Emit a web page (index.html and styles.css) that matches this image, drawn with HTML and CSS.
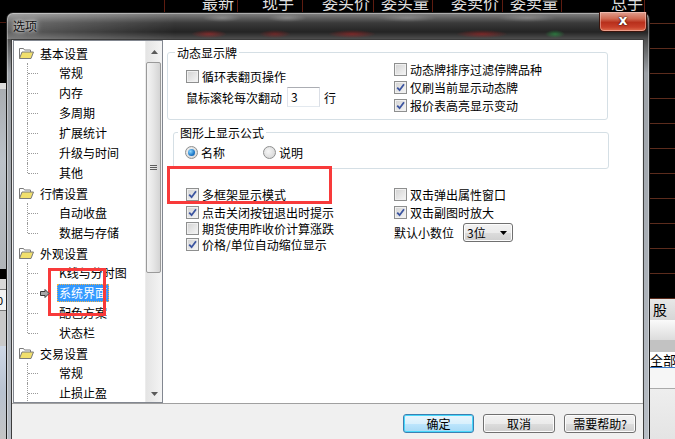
FILE: index.html
```html
<!DOCTYPE html>
<html lang="zh-CN">
<head>
    <meta charset="UTF-8">
    <meta name="viewport" content="width=device-width, initial-scale=1.0">
    <title>选项</title>
    <link rel="stylesheet" href="styles.css">
</head>
<body>
    <!-- trading screen behind the dialog -->
    <div class="app">
        <div class="quote-head">
            <div class="qcell qc-code"></div>
            <div class="qcell qc-last">最新</div>
            <div class="qcell qc-hand">现手</div>
            <div class="qcell qc-bid">委买价</div>
            <div class="qcell qc-bidv">委买量</div>
            <div class="qcell qc-ask">委卖价</div>
            <div class="qcell qc-askv">委卖量</div>
            <div class="qcell qc-total">总手</div>
            <div class="qcell qc-rest"></div>
        </div>
        <div class="app-body">
            <div class="strip-left">
                <div class="ls-a"></div>
                <div class="ls-b"></div>
                <div class="ls-c"></div>
                <div class="ls-d"></div>
                <div class="ls-e"></div>
                <div class="ls-f">0</div>
                <div class="ls-g"></div>
                <div class="ls-h"></div>
            </div>
            <div class="app-center"></div>
            <div class="strip-right">
                <div class="rs-rows"></div>
                <div class="rs-tab">股</div>
                <div class="rs-gap"></div>
                <div class="rs-bar"></div>
                <div class="rs-all">全部</div>
                <div class="rs-rest"></div>
            </div>
        </div>
    </div>

    <div class="dialog">
        <div class="titlebar">
            <span class="title">选项</span>
            <span class="close-btn">x</span>
        </div>
        <div class="client">
            <div class="client-main">
                <div class="tree">
                    <div class="tree-list">
                        <div class="node">
                            <svg class="folder" width="16" height="14" viewBox="0 0 16 14"><path d="M1.5 12.5V2.5h4l1 1.5h6v2" fill="#fff" stroke="#7a7a7a"/><path d="M1.5 12.5l2.5-6.5h11.5l-2.5 6.5z" fill="#f1df6c" stroke="#7a7a7a"/></svg>
                            <span>基本设置</span>
                        </div>
                        <div class="branch">
                            <div class="leaf"><span class="leaf-text">常规</span></div>
                            <div class="leaf"><span class="leaf-text">内存</span></div>
                            <div class="leaf"><span class="leaf-text">多周期</span></div>
                            <div class="leaf"><span class="leaf-text">扩展统计</span></div>
                            <div class="leaf"><span class="leaf-text">升级与时间</span></div>
                            <div class="leaf"><span class="leaf-text">其他</span></div>
                        </div>
                        <div class="node">
                            <svg class="folder" width="16" height="14" viewBox="0 0 16 14"><path d="M1.5 12.5V2.5h4l1 1.5h6v2" fill="#fff" stroke="#7a7a7a"/><path d="M1.5 12.5l2.5-6.5h11.5l-2.5 6.5z" fill="#f1df6c" stroke="#7a7a7a"/></svg>
                            <span>行情设置</span>
                        </div>
                        <div class="branch">
                            <div class="leaf"><span class="leaf-text">自动收盘</span></div>
                            <div class="leaf"><span class="leaf-text">数据与存储</span></div>
                        </div>
                        <div class="node">
                            <svg class="folder" width="16" height="14" viewBox="0 0 16 14"><path d="M1.5 12.5V2.5h4l1 1.5h6v2" fill="#fff" stroke="#7a7a7a"/><path d="M1.5 12.5l2.5-6.5h11.5l-2.5 6.5z" fill="#f1df6c" stroke="#7a7a7a"/></svg>
                            <span>外观设置</span>
                        </div>
                        <div class="branch">
                            <div class="leaf"><span class="leaf-text">K线与分时图</span></div>
                            <div class="leaf">
                                <svg class="pointer" width="10" height="9" viewBox="0 0 10 9"><path d="M0.5 2.5h4.5v-2l4 4-4 4v-2h-4.5z" fill="#a8a8a8" stroke="#3a3a3a"/></svg>
                                <span class="leaf-text selected">系统界面</span>
                            </div>
                            <div class="leaf"><span class="leaf-text">配色方案</span></div>
                            <div class="leaf"><span class="leaf-text">状态栏</span></div>
                        </div>
                        <div class="node">
                            <svg class="folder" width="16" height="14" viewBox="0 0 16 14"><path d="M1.5 12.5V2.5h4l1 1.5h6v2" fill="#fff" stroke="#7a7a7a"/><path d="M1.5 12.5l2.5-6.5h11.5l-2.5 6.5z" fill="#f1df6c" stroke="#7a7a7a"/></svg>
                            <span>交易设置</span>
                        </div>
                        <div class="branch">
                            <div class="leaf"><span class="leaf-text">常规</span></div>
                            <div class="leaf"><span class="leaf-text">止损止盈</span></div>
                            <div class="leaf"><span class="leaf-text">其他</span></div>
                        </div>
                    </div>
                    <div class="vscroll">
                        <div class="sb-btn sb-up"><svg width="7" height="4" viewBox="0 0 7 4"><path d="M0 4L3.5 0L7 4z" fill="#5a5a5a"/></svg></div>
                        <div class="sb-thumb"><span class="grip"></span></div>
                        <div class="sb-track"></div>
                        <div class="sb-btn sb-down"><svg width="7" height="4" viewBox="0 0 7 4"><path d="M0 0L3.5 4L7 0z" fill="#5a5a5a"/></svg></div>
                    </div>
                </div>

                <div class="panel">
                    <fieldset class="group group-live">
                        <legend>动态显示牌</legend>
                        <div class="cols">
                            <div class="col col-live-left">
                                <div class="chk chk-tall"><span class="box"></span>循环表翻页操作</div>
                                <div class="spin-row">鼠标滚轮每次翻动<span class="num-input">3</span>行</div>
                            </div>
                            <div class="col">
                                <div class="chk chk-tall"><span class="box"></span>动态牌排序过滤停牌品种</div>
                                <div class="chk chk-tall"><span class="box on"><svg width="9" height="9" viewBox="0 0 9 9"><path d="M1.2 4.6L3.6 7.2L8 1.2" fill="none" stroke="#3b54a0" stroke-width="1.8"/></svg></span>仅刷当前显示动态牌</div>
                                <div class="chk chk-tall"><span class="box on"><svg width="9" height="9" viewBox="0 0 9 9"><path d="M1.2 4.6L3.6 7.2L8 1.2" fill="none" stroke="#3b54a0" stroke-width="1.8"/></svg></span>报价表高亮显示变动</div>
                            </div>
                        </div>
                    </fieldset>

                    <fieldset class="group group-formula">
                        <legend>图形上显示公式</legend>
                        <div class="radios">
                            <div class="radio radio-first"><span class="dot on"></span>名称</div>
                            <div class="radio"><span class="dot"></span>说明</div>
                        </div>
                    </fieldset>

                    <div class="cols misc">
                        <div class="col">
                            <div class="chk chk-first"><span class="box on"><svg width="9" height="9" viewBox="0 0 9 9"><path d="M1.2 4.6L3.6 7.2L8 1.2" fill="none" stroke="#3b54a0" stroke-width="1.8"/></svg></span>多框架显示模式</div>
                            <div class="chk"><span class="box on"><svg width="9" height="9" viewBox="0 0 9 9"><path d="M1.2 4.6L3.6 7.2L8 1.2" fill="none" stroke="#3b54a0" stroke-width="1.8"/></svg></span>点击关闭按钮退出时提示</div>
                            <div class="chk"><span class="box"></span>期货使用昨收价计算涨跌</div>
                            <div class="chk"><span class="box on"><svg width="9" height="9" viewBox="0 0 9 9"><path d="M1.2 4.6L3.6 7.2L8 1.2" fill="none" stroke="#3b54a0" stroke-width="1.8"/></svg></span>价格/单位自动缩位显示</div>
                        </div>
                        <div class="col">
                            <div class="chk chk-first"><span class="box"></span>双击弹出属性窗口</div>
                            <div class="chk"><span class="box on"><svg width="9" height="9" viewBox="0 0 9 9"><path d="M1.2 4.6L3.6 7.2L8 1.2" fill="none" stroke="#3b54a0" stroke-width="1.8"/></svg></span>双击副图时放大</div>
                            <div class="dec-row">
                                <span>默认小数位</span>
                                <span class="select">3位<svg width="7" height="4" viewBox="0 0 7 4"><path d="M0 0L3.5 4L7 0z" fill="#000"/></svg></span>
                            </div>
                        </div>
                    </div>
                </div>
            </div>

            <div class="btn-bar">
                <span class="btn btn-default">确定</span>
                <span class="btn">取消</span>
                <span class="btn">需要帮助?</span>
            </div>
        </div>
    </div>

    <!-- annotation boxes -->
    <div class="mark mark-frame"></div>
    <div class="mark mark-tree"></div>
</body>
</html>
```

FILE: styles.css
```css
* {
    margin: 0;
    padding: 0;
    box-sizing: border-box;
}

body {
    width: 675px;
    height: 439px;
    overflow: hidden;
    position: relative;
    background: #000;
    font-family: "Noto Sans CJK SC", sans-serif;
    font-size: 12px;
    color: #000;
}

/* background trading screen */
.app {
    display: flex;
    flex-direction: column;
    height: 439px;
}

.quote-head {
    display: flex;
    height: 12px;
    flex-shrink: 0;
    overflow: hidden;
}

.qcell {
    height: 18px;
    margin-top: -6px;
    border-right: 1px solid #5e1c10;
    color: #dedede;
    font-size: 16px;
    line-height: 16px;
    text-align: right;
    padding-right: 3px;
    flex-shrink: 0;
}

.qc-code { width: 165px; }
.qc-last { width: 73px; }
.qc-hand { width: 65px; padding-right: 8px; }
.qc-bid { width: 71px; }
.qc-bidv { width: 59px; }
.qc-ask { width: 70px; }
.qc-askv { width: 59px; }
.qc-total { width: 83px; padding-right: 1px; }
.qc-rest { flex: 1; border-right: none; }

.app-body {
    flex: 1;
    display: flex;
}

.strip-left {
    width: 6px;
    display: flex;
    flex-direction: column;
}

.ls-a { height: 71px; background: linear-gradient(#000 10px, #4a1a10 10px, #4a1a10 11px, #000 11px); }
.ls-b { height: 6px; background: #dcdcdc; }
.ls-c { height: 180px; background: linear-gradient(#a9adb2, #bcc2c9 40%, #b0b4b8); }
.ls-d { height: 10px; background: #000; }
.ls-e { height: 10px; background: #d8d8d8; }
.ls-f { height: 22px; background: #f2f2f2; border-top: 1px solid #777; border-bottom: 1px solid #777; font-size: 11px; line-height: 20px; text-indent: -3px; overflow: hidden; }
.ls-g { height: 35px; background: #c9c9c9; }
.ls-h { flex: 1; background: linear-gradient(#cfd8e6, #b8c2d0 50%, #c4c4c4); }

.app-center {
    flex: 1;
}

.strip-right {
    width: 25px;
    display: flex;
    flex-direction: column;
}

.rs-rows {
    height: 286px;
    background: repeating-linear-gradient(to bottom, #000 0, #000 24px, #5c2c1d 24px, #5c2c1d 25px);
    background-position: 0 -13px;
}

.rs-tab {
    height: 22px;
    background: linear-gradient(#e8e8e8, #d6d6d6);
    border-top: 1px solid #5c2c1d;
    font-size: 14px;
    line-height: 21px;
    padding-left: 3px;
}

.rs-gap { height: 20px; background: linear-gradient(#fafafa, #dcdcdc); }
.rs-bar { height: 12px; background: #c2c2c2; }

.rs-all {
    height: 16px;
    background: #fff;
    border-bottom: 1px solid #3a78c8;
    font-size: 13px;
    line-height: 15px;
    white-space: nowrap;
    overflow: hidden;
}

.rs-rest {
    flex: 1;
    background: linear-gradient(#f6f6f6 20px, #aaa 20px, #aaa 21px, #eee 21px, #e4e4e4);
}

/* dialog window */
.dialog {
    position: absolute;
    left: 6px;
    top: 12px;
    width: 644px;
    height: 440px;
    border: 1px solid #1e1e1e;
    border-radius: 7px 7px 0 0;
    padding: 0 5px 0 4px;
    display: flex;
    flex-direction: column;
    background: linear-gradient(to bottom, #858585 0, #3a3a3a 10px, #242424 19px, #4e4e4e 26px, #9da2a8 60px, #b8bec6 100%);
    box-shadow: inset 0 0 0 1px rgba(255, 255, 255, 0.35);
}

.titlebar {
    height: 26px;
    flex-shrink: 0;
    display: flex;
    justify-content: space-between;
    margin: 0 -4px;
    padding: 0 6px 0 6px;
    border-radius: 6px 6px 0 0;
    background:
        radial-gradient(ellipse 18px 4px at 202px 21px, rgba(220, 40, 40, 0.45), transparent),
        radial-gradient(ellipse 16px 4px at 268px 21px, rgba(200, 30, 30, 0.4), transparent),
        radial-gradient(ellipse 24px 4px at 345px 21px, rgba(210, 30, 30, 0.45), transparent),
        radial-gradient(ellipse 26px 4px at 475px 21px, rgba(210, 30, 30, 0.45), transparent),
        radial-gradient(ellipse 10px 4px at 548px 21px, rgba(40, 200, 80, 0.45), transparent),
        radial-gradient(ellipse 20px 4px at 215px 5px, rgba(255, 255, 255, 0.25), transparent),
        radial-gradient(ellipse 20px 4px at 280px 5px, rgba(255, 255, 255, 0.25), transparent),
        radial-gradient(ellipse 30px 4px at 400px 5px, rgba(255, 255, 255, 0.22), transparent),
        radial-gradient(ellipse 30px 4px at 520px 5px, rgba(255, 255, 255, 0.22), transparent),
        linear-gradient(to right, rgba(255, 255, 255, 0.28), rgba(255, 255, 255, 0) 170px);
}

.title {
    line-height: 26px;
    font-size: 12px;
    color: #111;
    text-shadow: 0 0 6px #fff, 0 0 3px rgba(255, 255, 255, 0.8);
}

.close-btn {
    width: 48px;
    height: 20px;
    margin-top: -1px;
    margin-right: -5px;
    border: 1px solid #3a140c;
    border-top: none;
    border-radius: 0 0 5px 5px;
    background: linear-gradient(#e0a090 0, #d06a52 35%, #b8301c 55%, #c8402a 80%, #e07050 100%);
    box-shadow: inset 0 0 0 1px rgba(255, 220, 210, 0.45);
    color: #fff;
    font-family: "DejaVu Sans", sans-serif;
    font-weight: bold;
    font-size: 14px;
    line-height: 16px;
    text-align: center;
    text-shadow: 0 0 2px #3a0a00, 0 0 1px #000;
}

.client {
    flex: 1;
    display: flex;
    flex-direction: column;
    border: 1px solid #3c3c3c;
    background: #f0f0f0;
}

.client-main {
    height: 363px;
    display: flex;
}

/* tree */
.tree {
    width: 150px;
    margin-left: 1px;
    display: flex;
    background: #fff;
    border: 1px solid #828790;
}

.tree-list {
    flex: 1;
    overflow: hidden;
    padding-top: 2px;
}

.node {
    height: 20px;
    display: flex;
    align-items: center;
    gap: 6px;
    padding-left: 4px;
}

.leaf {
    position: relative;
    height: 20px;
    display: flex;
    align-items: center;
    padding-left: 43px;
}

.leaf::before {
    content: "";
    position: absolute;
    left: 13px;
    top: 0;
    height: 20px;
    border-left: 1px dotted #9a9a9a;
}

.leaf:last-child::before {
    height: 10px;
}

.leaf::after {
    content: "";
    position: absolute;
    left: 14px;
    top: 10px;
    width: 10px;
    border-top: 1px dotted #9a9a9a;
}

.leaf-text {
    padding: 0 2px;
    line-height: 18px;
    white-space: nowrap;
}

.leaf-text.selected {
    background: #3399ff;
    color: #fff;
    outline: 1px dotted #f2b14a;
    outline-offset: -1px;
}

.pointer {
    position: absolute;
    left: 26px;
    top: 6px;
    z-index: 1;
}

.vscroll {
    width: 17px;
    display: flex;
    flex-direction: column;
    background: linear-gradient(to right, #e4e4e4, #f4f4f4);
    border-left: 1px solid #ececec;
}

.sb-btn {
    height: 20px;
    display: flex;
    justify-content: center;
    padding-top: 10px;
}

.sb-up {
    padding-top: 9px;
}

.sb-thumb {
    height: 211px;
    margin: 1px 1px 0 0;
    border: 1px solid #9a9a9a;
    border-radius: 2px;
    background: linear-gradient(to right, #f4f4f4, #e6e6e6 50%, #d4d4d4);
    display: flex;
    align-items: center;
    justify-content: center;
}

.grip {
    width: 7px;
    height: 5px;
    background: linear-gradient(#5e5e5e 1px, transparent 1px, transparent 2px, #5e5e5e 2px, #5e5e5e 3px, transparent 3px, transparent 4px, #5e5e5e 4px);
}

.sb-track {
    flex: 1;
}

/* right panel */
.panel {
    flex: 1;
    margin-right: 1px;
    background: #fff;
    padding-top: 5px;
}

.group {
    border: 1px solid #d5dfe5;
    border-radius: 3px;
}

.group legend {
    line-height: 15px;
    padding: 0 2px;
}

.group-live {
    width: 441px;
    margin-left: 4px;
    padding: 0 0 5px 18px;
}

.group-live legend {
    margin-left: -11px;
}

.cols {
    display: grid;
    grid-template-columns: 208px auto;
}

.col-live-left {
    padding-top: 7px;
}

.chk {
    height: 16px;
    display: flex;
    align-items: center;
    gap: 3px;
    white-space: nowrap;
}

.chk-tall {
    height: 18px;
}

.chk-first {
    margin-bottom: 2px;
}

.box {
    width: 13px;
    height: 13px;
    flex-shrink: 0;
    border: 1px solid #8e8f8f;
    background: linear-gradient(135deg, #d2d2d2, #f6f6f6);
    box-shadow: inset 0 0 0 1px #f0f0f0;
    display: flex;
    align-items: center;
    justify-content: center;
}

.spin-row {
    height: 20px;
    margin-top: 2px;
    display: flex;
    align-items: center;
    gap: 4px;
}

.num-input {
    width: 33px;
    height: 20px;
    margin-left: 1px;
    border: 1px solid;
    border-color: #abadb3 #dbdfe6 #e3e9ef #e2e3ea;
    background: #fff;
    line-height: 18px;
    padding-left: 3px;
}

.group-formula {
    width: 436px;
    margin: 5px 0 0 10px;
    padding: 3px 0 7px 11px;
}

.group-formula legend {
    margin-left: -7px;
}

.radios {
    display: flex;
    height: 18px;
}

.radio {
    display: flex;
    align-items: center;
    gap: 3px;
}

.radio-first {
    width: 78px;
}

.dot {
    width: 13px;
    height: 13px;
    border-radius: 50%;
    border: 1px solid #8e8f8f;
    background: radial-gradient(circle at 40% 40%, #f6f6f6, #d0d0d0);
    display: flex;
    align-items: center;
    justify-content: center;
}

.dot.on::after {
    content: "";
    width: 7px;
    height: 7px;
    border-radius: 50%;
    background: radial-gradient(circle at 35% 35%, #8fd8ff, #1d78c8 60%, #0c4f98);
}

.misc {
    margin-top: 17px;
    padding-left: 23px;
}

.dec-row {
    height: 19px;
    margin-top: 3px;
    display: flex;
    align-items: center;
    gap: 9px;
}

.select {
    width: 50px;
    height: 19px;
    display: flex;
    align-items: center;
    justify-content: space-between;
    padding: 0 5px 0 3px;
    border: 1px solid #707070;
    border-radius: 3px;
    background: linear-gradient(#f2f2f2, #ebebeb 50%, #dddddd 50%, #cfcfcf);
    box-shadow: inset 0 0 0 1px #fcfcfc;
}

/* bottom buttons */
.btn-bar {
    flex: 1;
    border-top: 1px solid #a0a0a0;
    display: flex;
    justify-content: flex-end;
    align-items: flex-start;
    gap: 9px;
    padding: 10px 7px 0 0;
}

.btn {
    width: 72px;
    height: 19px;
    border: 1px solid #707070;
    border-radius: 3px;
    background: linear-gradient(#f2f2f2, #ebebeb 50%, #dddddd 50%, #cfcfcf);
    box-shadow: inset 0 0 0 1px #fcfcfc;
    text-align: center;
    line-height: 17px;
}

.btn-default {
    width: 71px;
    border-color: #3c7fb1;
    background: linear-gradient(#eaf6fd, #d9f0fc 50%, #bee6fd 50%, #a7d9f5);
    box-shadow: inset 0 0 0 1px #48d8fb;
}

/* annotation boxes */
.mark {
    position: absolute;
    border: 3px solid #f83a3a;
}

.mark-frame {
    left: 167px;
    top: 166px;
    width: 165px;
    height: 38px;
}

.mark-tree {
    left: 48px;
    top: 268px;
    width: 58px;
    height: 48px;
}
```
